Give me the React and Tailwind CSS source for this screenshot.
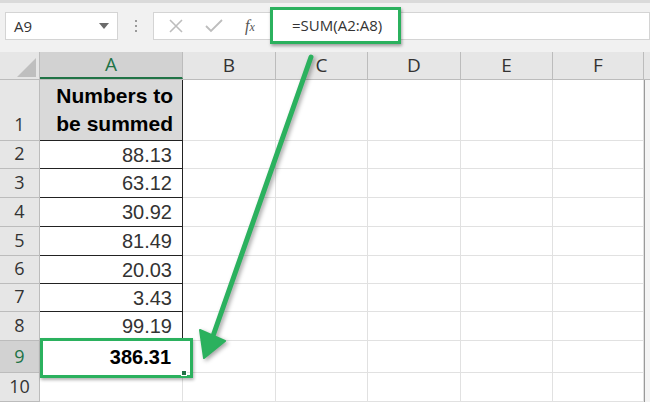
import React from "react";

const COLS = [
  { key: "A", w: 143 },
  { key: "B", w: 93 },
  { key: "C", w: 92 },
  { key: "D", w: 93 },
  { key: "E", w: 92 },
  { key: "F", w: 91 },
];

const VALUES = ["88.13", "63.12", "30.92", "81.49", "20.03", "3.43", "99.19"];
const ROW_H = [28, 29, 29, 29, 28, 28, 29, 32, 29];

const uiFont = { fontFamily: '"Open Sans", "Noto Sans", sans-serif' };
const cellFont = { fontFamily: '"Liberation Sans", Arial, sans-serif' };

function Toolbar() {
  return (
    <div className="h-[52px] bg-[#f1f1f1] border-t-[3px] border-[#dadada] relative flex items-start pt-[9px] pl-[5px]" style={uiFont}>
      {/* Name box */}
      <div className="w-[113px] h-[28px] bg-white border border-[#d4d4d4] flex items-center justify-between pl-[8px] pr-[8px]">
        <span className="text-[15px] text-[#333]">A9</span>
        <svg width="10" height="6" viewBox="0 0 10 6">
          <path d="M0 0 L10 0 L5 6 Z" fill="#6b6b6b" />
        </svg>
      </div>
      <div className="w-[35px] h-[28px] flex flex-col items-center justify-center gap-[3px]">
        <span className="w-[2px] h-[2px] bg-[#9a9a9a]" />
        <span className="w-[2px] h-[2px] bg-[#9a9a9a]" />
        <span className="w-[2px] h-[2px] bg-[#9a9a9a]" />
      </div>
      {/* Formula bar */}
      <div className="flex-1 h-[28px] bg-white border border-[#d4d4d4] flex items-center">
        <div className="w-[118px] flex items-center pl-[15px]">
          <svg width="14" height="14" viewBox="0 0 14 14">
            <path d="M1 1 L13 13 M13 1 L1 13" stroke="#bdbdbd" strokeWidth="1.6" />
          </svg>
          <svg className="ml-[22px]" width="18" height="14" viewBox="0 0 18 14">
            <path d="M1 7 L6 12 L17 1" stroke="#bdbdbd" strokeWidth="1.8" fill="none" />
          </svg>
          <span className="ml-[22px] text-[16px] italic text-[#555] leading-none" style={{ fontFamily: '"Liberation Serif", serif' }}>
            f<span className="text-[12px]">x</span>
          </span>
        </div>
      </div>
      {/* Highlight around formula */}
      <div className="absolute left-[270px] top-[4px] w-[131px] h-[37px] border-[3px] border-[#2bb15e] bg-white flex items-center pl-[19px] shadow-[1px_2px_3px_rgba(0,0,0,0.35)]">
        <span className="text-[15px] text-[#333]">=SUM(A2:A8)</span>
      </div>
    </div>
  );
}

function HeaderRow() {
  return (
    <div className="flex h-[28px] bg-[#e6e6e6] border-b border-[#bcbcbc]" style={uiFont}>
      <div className="w-[40px] shrink-0 relative border-r border-[#bcbcbc]">
        <svg className="absolute right-[3px] bottom-[2px]" width="19" height="19" viewBox="0 0 19 19">
          <path d="M19 0 L19 19 L0 19 Z" fill="#bfbfbf" />
        </svg>
      </div>
      {COLS.map((c) => (
        <div
          key={c.key}
          style={{ width: c.w }}
          className={
            c.key === "A"
              ? "shrink-0 flex items-center justify-center text-[19px] text-[#217346] bg-[#d2d2d2] border-r border-[#bcbcbc] border-b-2 border-b-[#217346]"
              : "shrink-0 flex items-center justify-center text-[19px] text-[#333] border-r border-[#bcbcbc]"
          }
        >
          {c.key}
        </div>
      ))}
      <div className="flex-1" />
    </div>
  );
}

function RowHead({ n, h, active }) {
  return (
    <div
      style={{ height: h, ...uiFont }}
      className={
        active
          ? "w-[40px] shrink-0 flex items-center justify-center text-[18px] text-[#217346] bg-[#d2d2d2] border-r border-b border-[#bcbcbc]"
          : "w-[40px] shrink-0 flex items-end justify-center pb-[1px] text-[18px] text-[#333] bg-[#e6e6e6] border-r border-b border-[#bcbcbc]"
      }
    >
      {n}
    </div>
  );
}

function BlankCells({ h }) {
  return COLS.slice(1).map((c) => (
    <div key={c.key} style={{ width: c.w, height: h }} className="shrink-0 bg-white border-r border-b border-[#e1e1e1]" />
  ));
}

export default function App() {
  return (
    <div className="w-[650px] h-[405px] overflow-hidden bg-white relative">
      <Toolbar />
      <HeaderRow />

      {/* Row 1 */}
      <div className="flex">
        <div className="w-[40px] h-[61px] shrink-0 flex items-end justify-center pb-[2px] text-[18px] text-[#333] bg-[#e6e6e6] border-r border-b border-[#bcbcbc]" style={uiFont}>
          1
        </div>
        <div className="w-[143px] h-[61px] shrink-0 bg-[#d9d9d9] border-r border-b border-[#222] flex flex-col items-end justify-center pr-[9px] text-[21px] font-bold text-black leading-[28px]" style={cellFont}>
          <span>Numbers to</span>
          <span>be summed</span>
        </div>
        <BlankCells h={61} />
        <div className="flex-1 border-l border-[#9a9a9a] bg-[#f4f4f4]" />
      </div>

      {ROW_H.map((h, i) => {
        const n = i + 2;
        const isTotal = n === 9;
        const isLast = n === 10;
        return (
          <div key={n} className="flex">
            <RowHead n={n} h={h} active={isTotal} />
            <div
              style={{ height: h, ...cellFont }}
              className={
                isLast
                  ? "w-[143px] shrink-0 bg-white border-r border-b border-[#e1e1e1]"
                  : isTotal
                  ? "w-[143px] shrink-0 bg-white flex items-center justify-end pr-[12px] text-[20px] font-bold text-black"
                  : "w-[143px] shrink-0 bg-white border-r border-b border-[#222] flex items-center justify-end pr-[10px] text-[20px] text-[#333]"
              }
            >
              {isTotal ? "386.31" : isLast ? "" : VALUES[i]}
            </div>
            <BlankCells h={h} />
            <div className="flex-1 border-l border-[#9a9a9a] bg-[#f4f4f4]" />
          </div>
        );
      })}

      {/* Selection box on A9 */}
      <div className="absolute left-[40px] top-[338px] w-[153px] h-[40px] border-[3px] border-[#2bb15e] shadow-[1px_2px_3px_rgba(0,0,0,0.3)]">
        <span className="absolute right-[3px] bottom-[-1px] w-[6px] h-[6px] bg-[#217346] border border-white" />
      </div>

      {/* Arrow */}
      <svg className="absolute left-0 top-0 pointer-events-none" width="650" height="405" viewBox="0 0 650 405" style={{ filter: "drop-shadow(2px 2px 2px rgba(0,0,0,0.35))" }}>
        <line x1="311" y1="57" x2="213" y2="336" stroke="#2bb15e" strokeWidth="5" strokeLinecap="round" />
        <path d="M204 358 L200 330 L225 341 Z" fill="#2bb15e" stroke="#2bb15e" strokeWidth="2" strokeLinejoin="round" />
      </svg>
    </div>
  );
}
